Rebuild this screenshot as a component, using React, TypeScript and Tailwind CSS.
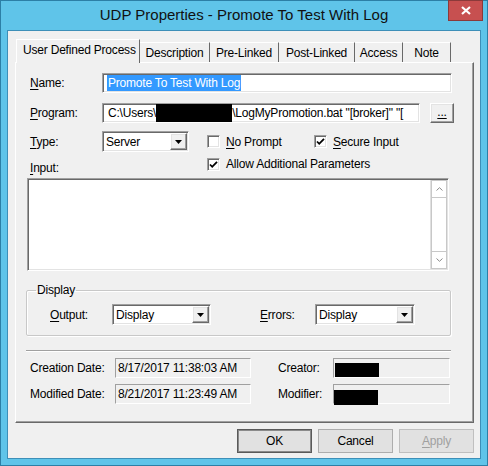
import React from "react";

const sunken =
  "border border-t-[#a0a0a0] border-l-[#a0a0a0] border-r-white border-b-white shadow-[inset_1px_1px_0_#696969,inset_-1px_-1px_0_#e3e3e3]";
const raised =
  "border border-t-white border-l-white border-r-[#696969] border-b-[#696969] shadow-[inset_-1px_-1px_0_#a0a0a0,inset_1px_1px_0_#e3e3e3]";

function U({ children }: { children: React.ReactNode }) {
  return <span className="underline underline-offset-[2px]">{children}</span>;
}

function Combo({ value, width }: { value: string; width: string }) {
  return (
    <div className={`${sunken} ${width} h-[21px] bg-white flex items-stretch`}>
      <div className="flex-1 pl-[3px] flex items-center">{value}</div>
      <div className={`${raised} w-[17px] bg-[#f0f0f0] flex items-center justify-center m-[1px]`}>
        <svg width="7" height="4" viewBox="0 0 7 4">
          <path d="M0 0h7L3.5 4z" fill="#000" />
        </svg>
      </div>
    </div>
  );
}

function Check({ checked }: { checked?: boolean }) {
  return (
    <div className={`${sunken} w-[13px] h-[13px] bg-white flex items-center justify-center shrink-0`}>
      {checked && (
        <svg width="9" height="9" viewBox="0 0 9 9">
          <path d="M1 4.5l2.2 2.3L8 1.8" fill="none" stroke="#000" strokeWidth="1.8" />
        </svg>
      )}
    </div>
  );
}

function Tab({ label, w }: { label: string; w: string }) {
  return (
    <div className={`${w} h-[20px] border-t border-t-white border-r border-r-[#696969] flex items-center justify-center`}>
      {label}
    </div>
  );
}

function Button({ children, kind }: { children: React.ReactNode; kind?: "default" | "disabled" }) {
  const b =
    kind === "default"
      ? "border-[#5a5a5a] shadow-[inset_0_0_0_1px_#8a8a8a]"
      : kind === "disabled"
      ? "border-[#bfbfbf] text-[#a0a0a0]"
      : "border-[#adadad]";
  return (
    <div className={`w-[75px] h-[24px] border bg-[#e1e1e1] ${b} flex items-center justify-center`}>{children}</div>
  );
}

export default function App() {
  return (
    <div className="w-[488px] h-[466px] bg-[#5fc4e9] border border-[#2c7fa6] flex flex-col font-['Liberation_Sans',Arial,sans-serif] text-[12px] leading-[14px] text-black tracking-[-0.2px]">
      <div className="relative h-[29px] flex items-center justify-center text-[15px] text-[#111] tracking-normal pb-[2px]">
        UDP Properties - Promote To Test With Log
        <div className="absolute right-[4px] top-[-1px] w-[35px] h-[21px] bg-[#c75050] border border-[#8b3a3a] flex items-center justify-center">
          <svg width="10" height="9" viewBox="0 0 10 9">
            <path d="M1 1l8 7M9 1L1 8" stroke="#fff" strokeWidth="2.2" />
          </svg>
        </div>
      </div>

      <div className="mx-[6px] mb-[6px] flex-1 bg-[#f0f0f0] border border-[#3d8fb8] flex flex-col pt-[8px] pl-[7px] pr-[6px] pb-[5px]">
        {/* tabs */}
        <div className="flex items-end ml-[1px] h-[23px]">
          <div className="relative z-10 w-[124px] h-[24px] -mb-[1px] bg-[#f0f0f0] border-l border-l-white border-t border-t-white border-r border-r-[#696969] pl-[6px] pt-[3px]">
            User Defined Process
          </div>
          <Tab label="Description" w="w-[70px]" />
          <Tab label="Pre-Linked" w="w-[69px]" />
          <Tab label="Post-Linked" w="w-[76px]" />
          <Tab label="Access" w="w-[48px]" />
          <Tab label="Note" w="w-[48px]" />
        </div>

        {/* panel */}
        <div className="h-[361px] border border-t-white border-l-white border-r-[#696969] border-b-[#696969] shadow-[inset_-1px_-1px_0_#a0a0a0] flex flex-col">
          <div className="flex items-center mt-[10px] pl-[14px]">
            <div className="w-[72px]">
              <U>N</U>ame:
            </div>
            <div className={`${sunken} w-[350px] h-[20px] bg-white flex items-center pl-[4px]`}>
              <span className="bg-[#3399ff] text-white py-[1px] px-[1px]">Promote To Test With Log</span>
            </div>
          </div>

          <div className="flex items-center mt-[10px] pl-[14px]">
            <div className="w-[72px]">
              <U>P</U>rogram:
            </div>
            <div className={`${sunken} w-[318px] h-[20px] bg-white flex items-center pl-[5px] overflow-hidden whitespace-nowrap`}>
              <span>C:\Users\</span>
              <span className="inline-block w-[76px] h-[18px] bg-black shrink-0" />
              <span>\LogMyPromotion.bat "[broker]" "[</span>
            </div>
            <div className={`${raised} ml-[10px] w-[24px] h-[20px] bg-[#f0f0f0] flex items-center justify-center pb-[3px]`}>
              <U>...</U>
            </div>
          </div>

          <div className="flex items-center mt-[8px] pl-[14px]">
            <div className="w-[72px]">
              <U>T</U>ype:
            </div>
            <Combo value="Server" width="w-[87px]" />
            <div className="flex items-center ml-[18px] w-[107px] gap-[6px]">
              <Check />
              <span>
                <U>N</U>o Prompt
              </span>
            </div>
            <div className="flex items-center gap-[6px]">
              <Check checked />
              <span>
                <U>S</U>ecure Input
              </span>
            </div>
          </div>

          <div className="flex mt-[1px] h-[22px] pl-[14px]">
            <div className="w-[177px] pt-[8px]">
              <U>I</U>nput:
            </div>
            <div className="flex items-center gap-[6px] pt-[4px] self-start">
              <Check checked />
              <span>Allow Additional Parameters</span>
            </div>
          </div>

          <div className={`${sunken} mt-[3px] ml-[11px] w-[422px] h-[93px] bg-white flex justify-end`}>
            <div className="w-[17px] m-[1px] border-l border-[#e0e0e0] flex flex-col bg-white">
              <div className="h-[18px] border border-[#c8c8c8] bg-white flex items-center justify-center">
                <svg width="7" height="4" viewBox="0 0 7 4">
                  <path d="M0.5 3.5L3.5 0.7 6.5 3.5" fill="none" stroke="#8a8a8a" />
                </svg>
              </div>
              <div className="flex-1 border-x border-[#c8c8c8]" />
              <div className="h-[18px] border border-[#c8c8c8] bg-white flex items-center justify-center">
                <svg width="7" height="4" viewBox="0 0 7 4">
                  <path d="M0.5 0.5L3.5 3.3 6.5 0.5" fill="none" stroke="#8a8a8a" />
                </svg>
              </div>
            </div>
          </div>

          <fieldset className="mt-[12px] ml-[10px] w-[425px] border border-[#c8c8c8] rounded-[2px] pl-[9px] pb-[10px] shadow-[1px_1px_0_#fff,inset_1px_1px_0_#fff]">
            <legend className="px-[1px]">Display</legend>
            <div className="flex items-center mt-[7px] ml-[14px]">
              <div className="w-[62px]">
                <U>O</U>utput:
              </div>
              <Combo value="Display" width="w-[99px]" />
              <div className="ml-[49px] w-[55px]">
                <U>E</U>rrors:
              </div>
              <Combo value="Display" width="w-[100px]" />
            </div>
          </fieldset>

          <div className="mt-[14px] ml-[10px] w-[425px] h-[2px] border-t border-t-[#a0a0a0] border-b border-b-white" />

          <div className="flex items-center mt-[6px] pl-[14px]">
            <div className="w-[85px]">Creation Date:</div>
            <div className="w-[136px] h-[20px] border border-t-[#a0a0a0] border-l-[#a0a0a0] border-r-white border-b-white flex items-center pl-[2px]">
              8/17/2017 11:38:03 AM
            </div>
            <div className="ml-[27px] w-[55px]">Creator:</div>
            <div className="w-[117px] h-[20px] border border-t-[#a0a0a0] border-l-[#a0a0a0] border-r-white border-b-white flex items-end pl-[1px]">
              <div className="w-[44px] h-[14px] bg-black" />
            </div>
          </div>

          <div className="flex items-center mt-[6px] pl-[14px]">
            <div className="w-[85px]">Modified Date:</div>
            <div className="w-[136px] h-[20px] border border-t-[#a0a0a0] border-l-[#a0a0a0] border-r-white border-b-white flex items-center pl-[2px]">
              8/21/2017 11:23:49 AM
            </div>
            <div className="ml-[27px] w-[55px]">Modifier:</div>
            <div className="w-[117px] h-[20px] border border-t-[#a0a0a0] border-l-[#a0a0a0] border-r-white border-b-white relative">
              <div className="absolute left-0 top-[5px] w-[44px] h-[15px] bg-black" />
            </div>
          </div>
        </div>

        {/* buttons */}
        <div className="flex justify-end gap-[6px] mt-[6px]">
          <Button kind="default">OK</Button>
          <Button>Cancel</Button>
          <Button kind="disabled">
            <U>A</U>pply
          </Button>
        </div>
      </div>
    </div>
  );
}
